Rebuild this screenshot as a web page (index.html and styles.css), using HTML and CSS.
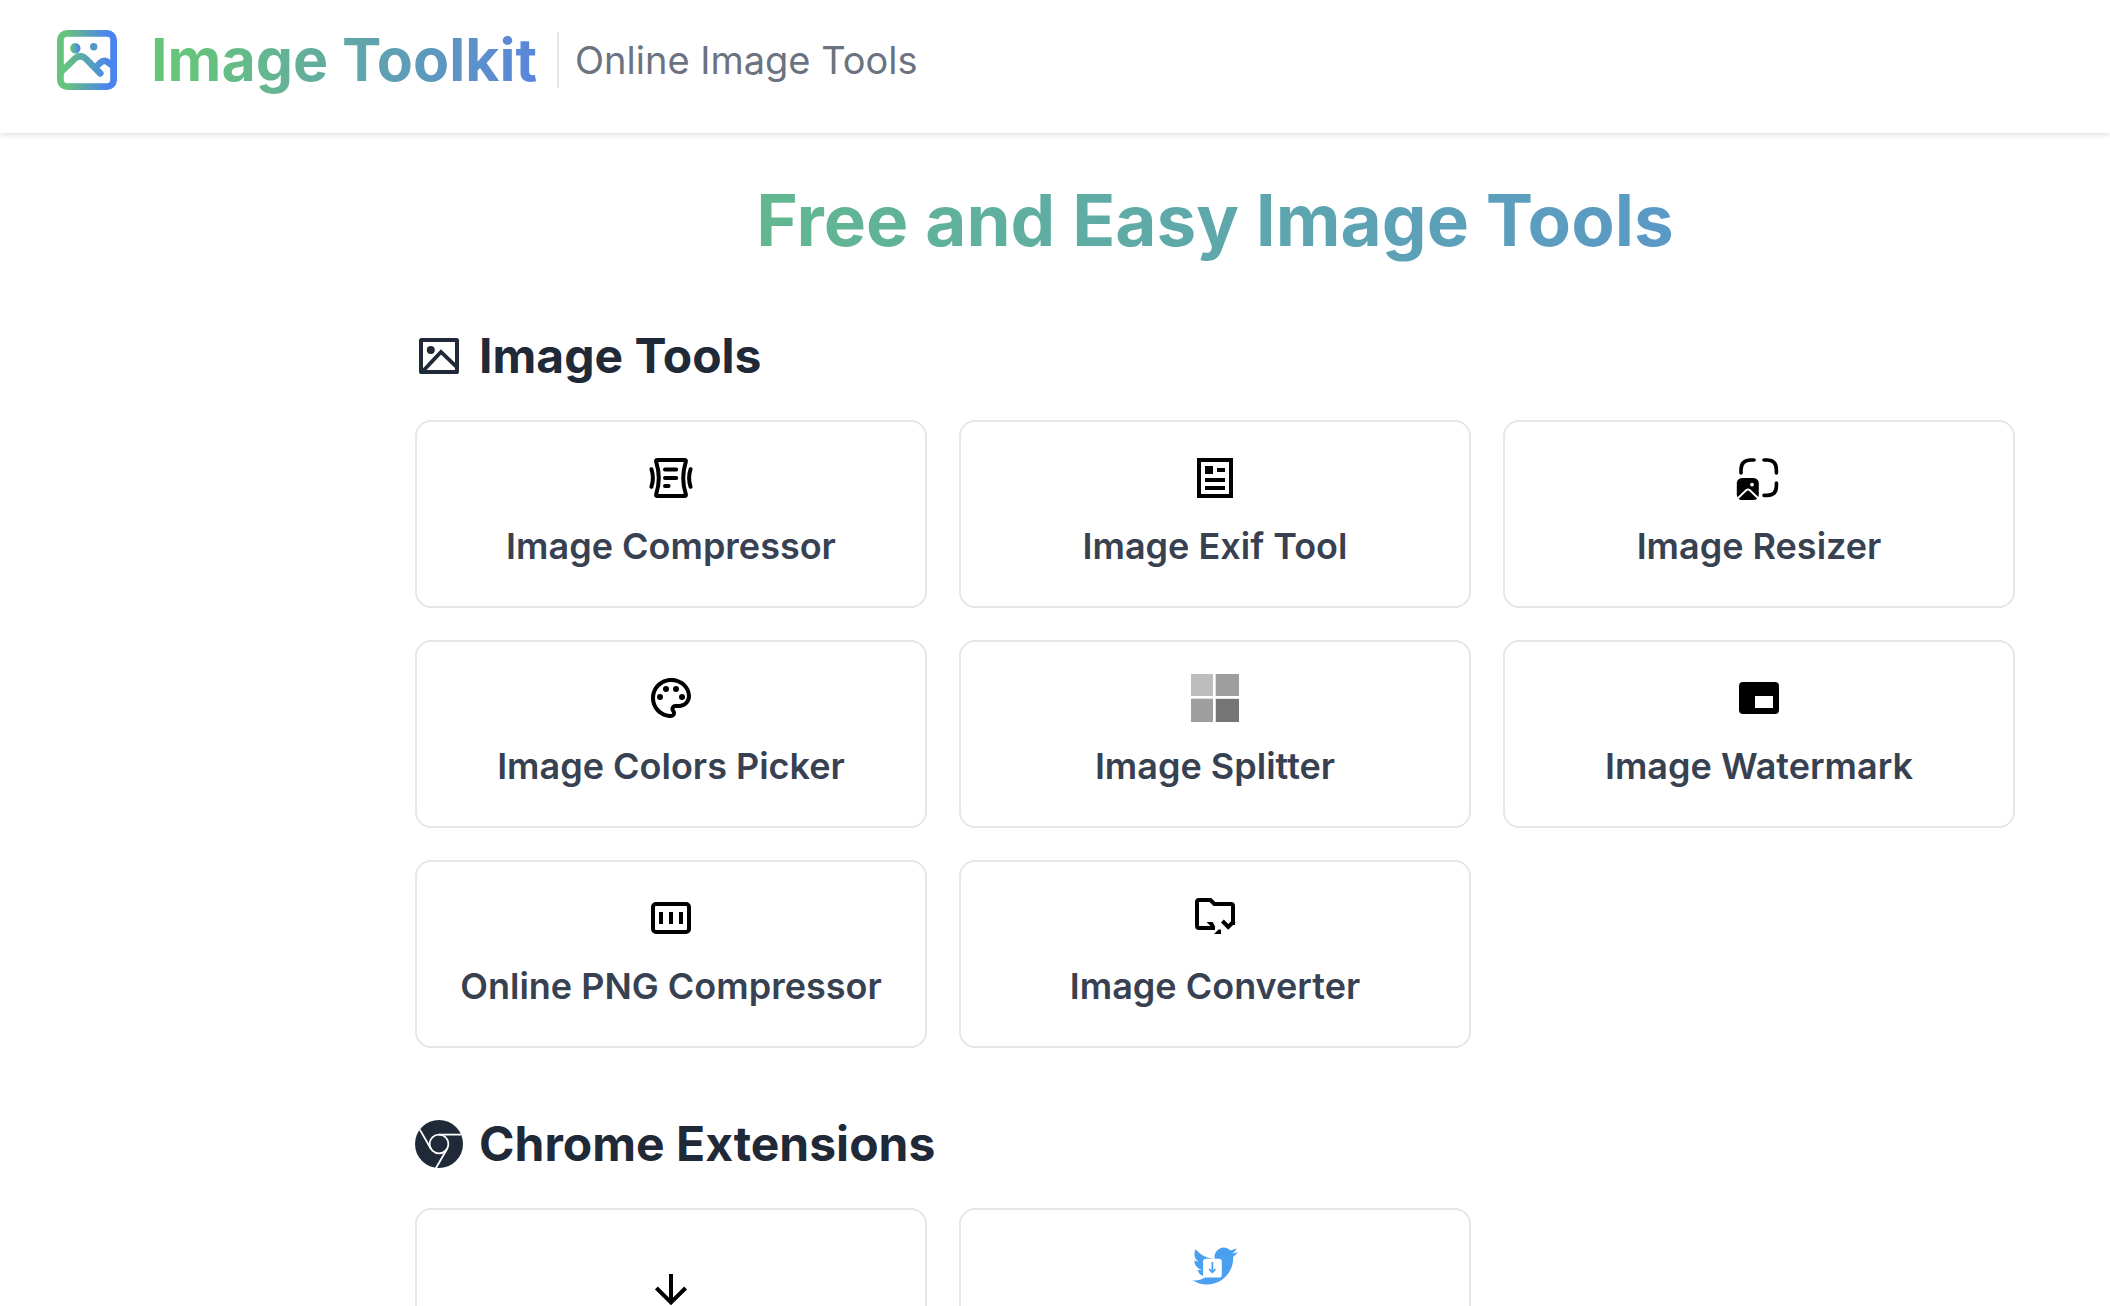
FILE: index.html
```html
<!DOCTYPE html>
<html lang="en">
<head>
    <meta charset="UTF-8">
    <meta name="viewport" content="width=device-width, initial-scale=1.0">
    <title>Image Toolkit</title>
    <link rel="stylesheet" href="styles.css">
</head>
<body>
    <header class="header">
        <a class="brand" href="#">
            <svg class="logo" viewBox="0 0 60 60" fill="none" aria-hidden="true">
                <defs>
                    <linearGradient id="brandGradient" x1="0" y1="0" x2="1" y2="0">
                        <stop offset="0.1" stop-color="#65c47b"/>
                        <stop offset="0.9" stop-color="#4a84ee"/>
                    </linearGradient>
                </defs>
                <rect x="3.4" y="3.4" width="53.2" height="53.2" rx="6.5" stroke="url(#brandGradient)" stroke-width="6.8"/>
                <circle cx="18.3" cy="18.3" r="5.2" fill="url(#brandGradient)"/>
                <circle cx="36.7" cy="16.7" r="3.7" fill="#5298c9"/>
                <path d="M3 43 18 28.5q5.3-4.5 10.6 0L43.3 43.3M41 35l2-2q4.5-4.2 9 0l5 4" stroke="url(#brandGradient)" stroke-width="6.6" stroke-linecap="round" stroke-linejoin="round"/>
            </svg>
            <span class="brand-name">Image Toolkit</span>
        </a>
        <span class="tagline">Online Image Tools</span>
    </header>

    <main class="main">
        <h1 class="title">Free and Easy Image Tools</h1>

        <section class="section">
            <h2 class="section-title">
                <svg class="icon" viewBox="0 0 24 24" fill="none" stroke="currentColor" stroke-width="2" aria-hidden="true">
                    <rect x="3" y="4" width="18" height="16" rx="0.3"/>
                    <path d="m4 19.5 9-9.500 7.5 7.200" stroke-width="1.9"/>
                    <circle cx="7.9" cy="9" r="2" fill="currentColor" stroke="none"/>
                </svg>
                Image Tools
            </h2>
            <div class="cards">
                <a class="card" href="#">
                    <svg class="icon" viewBox="0 0 24 24" fill="none" stroke="currentColor" stroke-width="2" stroke-linecap="round" stroke-linejoin="round" aria-hidden="true">
                        <path d="M5.2 3h13.600q.9 0 .6.9-2.600 8.100 0 16.200.3.9-.6.9H5.200q-.9 0-.6-.9 2.600-8.100 0-16.200-.3-.9.6-.9zM2.200 7.600q1.500 4.400 0 8.800M21.800 7.600q-1.500 4.400 0 8.800M9 7.800h5.600M9 12h5.600M9 16h1.800"/>
                    </svg>
                    <span class="card-name">Image Compressor</span>
                </a>
                <a class="card" href="#">
                    <svg class="icon" viewBox="0 0 24 24" fill="currentColor" aria-hidden="true">
                        <path fill-rule="evenodd" d="M3 2h18v20H3zM5 4v16h14V4z"/>
                        <path d="M7 6h4v4H7zM13 7h4v2h-4zM7 12h10v2H7zM7 16h10v2H7z"/>
                    </svg>
                    <span class="card-name">Image Exif Tool</span>
                </a>
                <a class="card" href="#">
                    <svg class="icon" viewBox="0 0 24 24" fill="none" aria-hidden="true">
                        <path d="M3 9.500V8q0-5 5-5h1.500M14.500 3H16q4.700 0 4.700 5v1.500M20.700 14.500V16q0 4.700-4.700 4.700h-1.500" stroke="currentColor" stroke-width="1.8" stroke-linecap="round"/>
                        <rect x="0.9" y="12" width="11" height="11" rx="2.6" fill="currentColor"/>
                        <circle cx="8.500" cy="15.300" r="0.950" fill="#fff"/>
                        <path d="m1 22.500 4.700-4.500q.8-.6 1.600 0l4.700 4.500" stroke="#fff" stroke-width="1"/>
                    </svg>
                    <span class="card-name">Image Resizer</span>
                </a>
                <a class="card" href="#">
                    <svg class="icon" viewBox="0 0 24 24" fill="currentColor" aria-hidden="true">
                        <path d="M12 22C6.490 22 2 17.510 2 12S6.490 2 12 2s10 4.040 10 9c0 3.310-2.690 6-6 6h-1.770c-.28 0-.5.220-.5.500 0 .120.050.230.130.330.410.470.640 1.060.640 1.670A2.500 2.500 0 0 1 12 22zm0-18c-4.410 0-8 3.590-8 8s3.590 8 8 8c.280 0 .5-.22.500-.5a.540.540 0 0 0-.14-.35c-.41-.46-.63-1.050-.63-1.650a2.500 2.500 0 0 1 2.500-2.500H16c2.210 0 4-1.790 4-4 0-3.860-3.590-7-8-7z"/>
                        <circle cx="6.500" cy="11.500" r="1.500"/>
                        <circle cx="9.500" cy="7.500" r="1.500"/>
                        <circle cx="14.500" cy="7.500" r="1.500"/>
                        <circle cx="17.500" cy="11.500" r="1.500"/>
                    </svg>
                    <span class="card-name">Image Colors Picker</span>
                </a>
                <a class="card" href="#">
                    <svg class="icon" viewBox="0 0 48 48" aria-hidden="true">
                        <path fill="#e0e0e0" d="M24 0h24v22H24zM0 24h22v24H0zM24 24h24v24H24z"/>
                        <path fill="#bdbdbd" d="M0 0h22v22H0z"/>
                        <path fill="#9e9e9e" d="M25 0h23v22H25zM0 25h22v23H0z"/>
                        <path fill="#757575" d="M25 25h23v23H25z"/>
                    </svg>
                    <span class="card-name">Image Splitter</span>
                </a>
                <a class="card" href="#">
                    <svg class="icon" viewBox="0 0 24 24" fill="currentColor" aria-hidden="true">
                        <path fill-rule="evenodd" d="M4 4h16a2 2 0 0 1 2 2v12a2 2 0 0 1-2 2H4a2 2 0 0 1-2-2V6a2 2 0 0 1 2-2zm6 7v6h9v-6z"/>
                    </svg>
                    <span class="card-name">Image Watermark</span>
                </a>
                <a class="card" href="#">
                    <svg class="icon" viewBox="0 0 24 24" fill="none" stroke="currentColor" stroke-width="2" aria-hidden="true">
                        <rect x="3" y="5" width="18" height="14" rx="1.500"/>
                        <path d="M7 9v6M12 9v6M17 9v6"/>
                    </svg>
                    <span class="card-name">Online PNG Compressor</span>
                </a>
                <a class="card" href="#">
                    <svg class="icon" viewBox="0 0 24 24" fill="none" stroke="currentColor" stroke-width="2" aria-hidden="true">
                        <path d="M12 17H4q-1 0-1-1V4q0-1 1-1h5.700l2 2H20q1 0 1 1v9.500M15.700 13.500l2.900 3 3-3"/>
                        <path d="M7.800 14h3l1.400 2.500h-2zM11.500 20l2.300-2.200H15V20z" fill="currentColor" stroke="none"/>
                    </svg>
                    <span class="card-name">Image Converter</span>
                </a>
            </div>
        </section>

        <section class="section">
            <h2 class="section-title">
                <svg class="icon" viewBox="0 0 24 24" aria-hidden="true">
                    <circle cx="12" cy="12" r="12" fill="currentColor"/>
                    <g fill="none" stroke="#fff" stroke-width="0.900">
                        <circle cx="12" cy="12" r="4.700"/>
                        <path d="M12 7.300h11"/>
                        <path d="M12 7.300h12" transform="rotate(120 12 12)"/>
                        <path d="M12 7.300h11" transform="rotate(240 12 12)"/>
                    </g>
                </svg>
                Chrome Extensions
            </h2>
            <div class="cards">
                <a class="card card-tall card-centered" href="#" aria-label="Download">
                    <svg class="icon" viewBox="0 0 24 24" fill="none" stroke="currentColor" stroke-width="2" aria-hidden="true">
                        <path d="M12 2v14"/>
                        <path d="m4.700 9 7.300 7.200L19.300 9"/>
                    </svg>
                </a>
                <a class="card card-tall" href="#" aria-label="Twitter">
                    <svg class="icon" viewBox="-0.8 -0.7 25.4 25.4" aria-hidden="true">
                        <path fill="#4a9ff0" d="M23.953 4.570a10 10 0 0 1-2.825.775 4.958 4.958 0 0 0 2.163-2.723c-.951.555-2.005.959-3.127 1.184a4.920 4.920 0 0 0-8.384 4.482C7.690 8.095 4.067 6.130 1.640 3.162a4.822 4.822 0 0 0-.666 2.475c0 1.710.870 3.213 2.188 4.096a4.904 4.904 0 0 1-2.228-.616v.06a4.923 4.923 0 0 0 3.946 4.827 4.996 4.996 0 0 1-2.212.085 4.936 4.936 0 0 0 4.604 3.417 9.867 9.867 0 0 1-6.102 2.105c-.39 0-.779-.023-1.170-.067a13.995 13.995 0 0 0 7.557 2.209c9.053 0 13.998-7.496 13.998-13.985 0-.21 0-.42-.015-.63A9.935 9.935 0 0 0 24 4.590z"/>
                        <rect x="5.600" y="8.100" width="9.900" height="10" rx="1.500" fill="#fff"/>
                        <path d="M10.500 9.900v5.200M8.800 13.600l1.700 1.700 1.700-1.700" fill="none" stroke="#4a9ff0" stroke-width="0.900"/>
                    </svg>
                </a>
            </div>
        </section>
    </main>
</body>
</html>
```
FILE: styles.css
```css
body {
    font-family: Inter, "Open Sans", sans-serif;
    height: 100vh;
    margin: 0;
    overflow: hidden;
    background-color: #fff;
    color: #1f2937;
}
.header {
    display: flex;
    align-items: flex-start;
    height: 133px;
    padding: 24px 56px;
    box-sizing: border-box;
    box-shadow: 0 1px 6px rgba(0, 0, 0, 0.16);
}
.brand {
    display: flex;
    align-items: center;
    text-decoration: none;
}
.logo {
    width: 60px;
    height: 60px;
    margin: 0 34px 0 1px;
}
.brand-name {
    font-size: 59px;
    font-weight: 700;
    line-height: 72px;
    color: transparent;
    background-image: linear-gradient(to right, #67c47b 10%, #5a85dc);
    background-clip: text;
}
.tagline {
    margin: 8px 0 0 20px;
    padding-left: 16px;
    border-left: 2px solid #e5e7eb;
    font-size: 38px;
    line-height: 56px;
    color: #6b7280;
}
.main {
    padding: 43px 95px 0 415px;
}
.title {
    margin: 0 0 60px;
    font-size: 71px;
    font-weight: 700;
    line-height: 88px;
    text-align: center;
    color: transparent;
    background-image: linear-gradient(to right, #64c37b, #588ddb);
    background-clip: text;
}
.section {
    margin-bottom: 64px;
}
.section-title {
    display: flex;
    align-items: center;
    gap: 16px;
    margin: 0 0 32px;
    font-size: 48px;
    font-weight: 700;
    line-height: 64px;
}
.icon {
    width: 48px;
    height: 48px;
    flex-shrink: 0;
}
.cards {
    display: grid;
    grid-template-columns: repeat(3, 1fr);
    gap: 32px;
}
.card {
    display: flex;
    flex-direction: column;
    align-items: center;
    gap: 16px;
    padding: 32px;
    border: 2px solid #e5e7eb;
    border-radius: 16px;
    color: #000;
    text-decoration: none;
}
.card-name {
    font-size: 36px;
    font-weight: 600;
    line-height: 56px;
    color: #374151;
    white-space: nowrap;
}
.card-tall {
    min-height: 176px;
}
.card-centered {
    padding-top: 60px;
}
```
